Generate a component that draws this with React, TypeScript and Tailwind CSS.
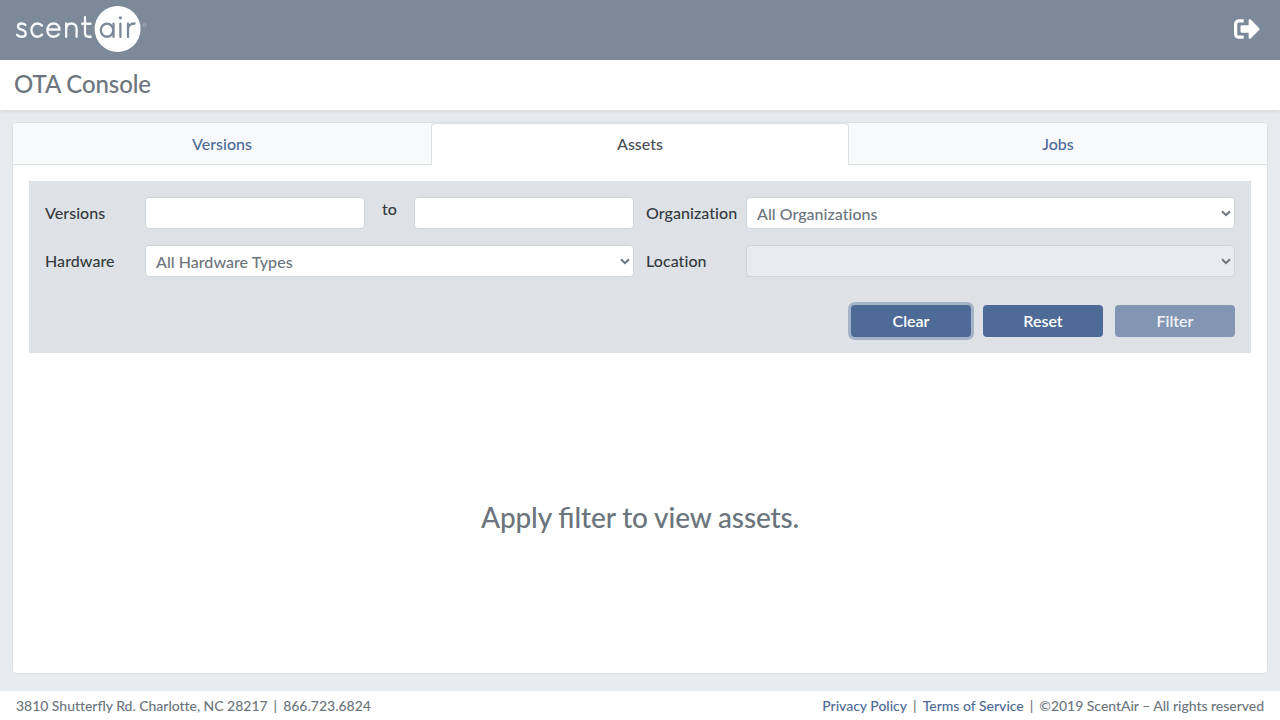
import type { ReactNode } from "react";
import { FaSignOutAlt } from "react-icons/fa";

function Logo() {
  return (
    <svg width="132" height="48" viewBox="0 0 132 48" className="block" role="img" aria-label="scentair">
      <g fill="none" stroke="#f8f9fa" strokeWidth="2.3" strokeLinecap="round" transform="translate(0 -.9) scale(1 1.06)">
        <path d="M10.4 18.7C9.3 17.7 8 17.3 6.5 17.3C4.4 17.3 3 18.4 3 20.1C3 22 4.6 22.6 6.7 23.1C9 23.7 10.7 24.5 10.7 26.7C10.7 28.7 9 29.9 6.7 29.9C4.7 29.9 3.1 29.2 2 27.9" />
        <path d="M27 19.4C25.800 18 24.300 17.300 22.500 17.300C19 17.300 16.400 20 16.400 23.600C16.400 27.200 19 29.900 22.500 29.900C24.300 29.900 25.900 29.100 27.100 27.700" />
        <path d="M32.400 23.100H44.500C44.400 19.700 41.900 17.300 38.500 17.300C35 17.300 32.300 20 32.300 23.600C32.300 27.300 35 29.900 38.700 29.900C40.800 29.900 42.600 29.100 43.800 27.600" />
        <path d="M51.200 17.400V29.900M51.200 22.600C51.200 19.400 53.400 17.300 56.300 17.300C59.500 17.300 61.600 19.400 61.600 22.300V29.900" />
        <path d="M70 11.500V26.400C70 28.800 71.300 29.900 73.700 29.900H75.700M67.200 17.600H75.500" />
      </g>
      <circle cx="102.600" cy="23" r="23" fill="#fff" />
      <g fill="none" stroke="#7b8998" strokeWidth="2.300" strokeLinecap="round" transform="translate(0 -.9) scale(1 1.06)">
        <circle cx="92" cy="23.700" r="6.200" />
        <path d="M98.500 17.500V29.900M105.400 17.500V29.900M113 17.500V29.900M113 23C113 19.500 115.500 17.300 119.500 17.300" />
      </g>
      <circle cx="105.400" cy="11.800" r="1.600" fill="#7b8998" />
      <circle cx="129.300" cy="19" r="1.400" fill="none" stroke="#a9b2bc" strokeWidth=".9" />
    </svg>
  );
}

function Chevron() {
  return (
    <svg width="10" height="7" viewBox="0 0 10 7" className="mt-px shrink-0" fill="none" stroke="#6c757d" strokeWidth="2">
      <path d="M1 1.200L5 5.200L9 1.200" />
    </svg>
  );
}

function Select({ value, disabled = false }: { value: string; disabled?: boolean }) {
  return (
    <div
      className={`flex h-8 flex-1 items-center justify-between rounded-[4px] border border-[#ced4da] pr-[3px] pl-[10px] text-[#6c757d] ${
        disabled ? "bg-[#e9ecef]" : "bg-white"
      }`}
    >
      <span className="pt-[2px] tracking-[0.03px]">{value}</span>
      <Chevron />
    </div>
  );
}

function Label({ children }: { children: ReactNode }) {
  return <span className="w-[100px] shrink-0 whitespace-nowrap tracking-[0.06px]">{children}</span>;
}

const button = "h-8 w-[120px] rounded-[4px] text-center font-semibold";

export default function App() {
  return (
    <div className="flex h-[720px] w-[1280px] flex-col overflow-hidden bg-[#e7ebee] font-['Lato',sans-serif] text-base leading-6 font-medium text-[#343a40] [font-variant-ligatures:no-common-ligatures]">
      <header className="flex h-[60px] shrink-0 items-center justify-between bg-[#7b8998] pr-5 pl-[15px]">
        <Logo />
        <FaSignOutAlt size={26} color="#fff" className="mb-[2px]" />
      </header>
      <div className="flex h-[50px] shrink-0 items-center bg-white px-[14px] pb-[2px] text-2xl tracking-[-0.1px] text-[#6c757d] shadow-[0_2px_4px_rgba(0,0,0,0.075)]">
        <h1>OTA Console</h1>
      </div>

      <main className="mx-3 mt-3 mb-[17px] flex flex-1 flex-col rounded-[4px] border border-[#dcdfe1] bg-white">
        <nav className="grid h-[42px] shrink-0 grid-cols-3 rounded-t-[3px] bg-[#f7f9fb] text-center leading-[42px] text-[#4e6b97]">
          <a className="h-[42px] rounded-tl-[3px] border-b border-[#dee2e6]">Versions</a>
          <a className="h-[42px] rounded-t-[4px] border-x border-t border-[#dee2e6] bg-white leading-[40px] text-[#495057]">Assets</a>
          <a className="h-[42px] rounded-tr-[3px] border-b border-[#dee2e6]">Jobs</a>
        </nav>

        <section className="mx-4 mt-4 flex flex-col gap-4 bg-[#dee2e6] p-4">
          <div className="grid grid-cols-2 gap-x-3 gap-y-4">
            <div className="flex items-center">
              <Label>Versions</Label>
              <input className="h-8 w-[220px] rounded-[4px] border border-[#ced4da] bg-white" />
              <span className="flex-1 pb-2 text-center">to</span>
              <input className="h-8 w-[220px] rounded-[4px] border border-[#ced4da] bg-white" />
            </div>
            <div className="flex items-center">
              <Label>Organization</Label>
              <Select value="All Organizations" />
            </div>
            <div className="flex items-center">
              <Label>Hardware</Label>
              <Select value="All Hardware Types" />
            </div>
            <div className="flex items-center">
              <Label>Location</Label>
              <Select value="" disabled />
            </div>
          </div>
          <div className="mt-3 flex justify-end gap-3">
            <button className={`${button} bg-[#4e6b97] text-white shadow-[0_0_0_3px_#a4b3c7]`}>Clear</button>
            <button className={`${button} bg-[#4e6b97] text-white`}>Reset</button>
            <button className={`${button} bg-[#8296b3] text-[#f0f2f5]`}>Filter</button>
          </div>
        </section>

        <div className="flex flex-1 items-center justify-center pt-2 text-[28px] tracking-[-0.14px] text-[#6c757d]">
          <p>
            Apply <span className="tracking-normal [font-variant-ligatures:common-ligatures]">fi</span>lter to view assets.
          </p>
        </div>
      </main>

      <footer className="flex h-[29px] shrink-0 items-center justify-between bg-white px-4 text-sm text-[#6c757d]">
        <div className="flex">
          <span className="tracking-[-0.03px]">
            3810 Shutter<span className="tracking-normal [font-variant-ligatures:common-ligatures]">fl</span>y Rd. Charlotte, NC 28217
          </span>
          <span className="px-[6px]">|</span>
          <span>866.723.6824</span>
        </div>
        <div className="flex">
          <a className="text-[#4e6b97]">Privacy Policy</a>
          <span className="px-[6px]">|</span>
          <a className="text-[#4e6b97]">Terms of Service</a>
          <span className="px-[6px]">|</span>
          <span className="tracking-[-0.03px]">©2019 ScentAir – All rights reserved</span>
        </div>
      </footer>
    </div>
  );
}
